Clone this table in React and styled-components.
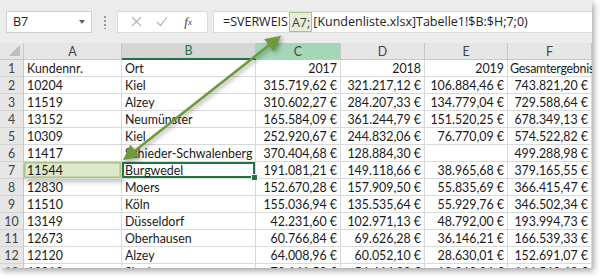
import React from "react";
import styled, { createGlobalStyle } from "styled-components";

const GlobalStyle = createGlobalStyle`
  html, body { margin: 0; padding: 0; background: #ffffff; }
  body { width: 600px; height: 278px; overflow: hidden; }
`;

const rows = [
  ["Kundennr.", "Ort", "2017", "2018", "2019", "Gesamtergebnis"],
  ["10204", "Kiel", "315.719,62 €", "321.217,12 €", "106.884,46 €", "743.821,20 €"],
  ["11519", "Alzey", "310.602,27 €", "284.207,33 €", "134.779,04 €", "729.588,64 €"],
  ["13152", "Neumünster", "165.584,09 €", "361.244,79 €", "151.520,25 €", "678.349,13 €"],
  ["10309", "Kiel", "252.920,67 €", "244.832,06 €", "76.770,09 €", "574.522,82 €"],
  ["11417", "Schieder-Schwalenberg", "370.404,68 €", "128.884,30 €", "", "499.288,98 €"],
  ["11544", "Burgwedel", "191.081,21 €", "149.118,66 €", "38.965,68 €", "379.165,55 €"],
  ["12830", "Moers", "152.670,28 €", "157.909,50 €", "55.835,69 €", "366.415,47 €"],
  ["11510", "Köln", "155.036,94 €", "135.535,64 €", "55.929,76 €", "346.502,34 €"],
  ["13149", "Düsseldorf", "42.231,60 €", "102.971,13 €", "48.792,00 €", "193.994,73 €"],
  ["12673", "Oberhausen", "60.766,84 €", "69.626,28 €", "36.146,21 €", "166.539,33 €"],
  ["12120", "Alzey", "64.008,96 €", "60.052,10 €", "28.630,01 €", "152.691,07 €"],
  ["12912", "Siegburg", "70.141,52 €", "56.464,30 €", "19.963,86 €", "146.569,68 €"],
];

const columns = ["A", "B", "C", "D", "E", "F"];

const Frame = styled.div`
  position: relative;
  width: 592px;
  height: 268px;
  overflow: hidden;
  background: #ffffff;
  box-shadow: 2px 3px 6px rgba(0, 0, 0, 0.35);
`;

const Toolbar = styled.div`
  display: flex;
  align-items: center;
  height: 43px;
  padding: 0 0 0 6px;
  box-sizing: border-box;
  background: #ececec;
  font-family: "Open Sans", "Liberation Sans", sans-serif;
`;

const NameBox = styled.div`
  display: flex;
  align-items: center;
  justify-content: space-between;
  width: 86px;
  height: 22px;
  box-sizing: border-box;
  padding: 0 6px;
  background: #fff;
  border: 1px solid #d0d0d0;
  font-size: 12.5px;
  color: #222;
`;

const Caret = styled.span`
  width: 0;
  height: 0;
  border-left: 3.5px solid transparent;
  border-right: 3.5px solid transparent;
  border-top: 4px solid #666;
`;

const Grip = styled.div`
  width: 2px;
  height: 14px;
  margin: 0 11px 0 12px;
  background: radial-gradient(circle, #999 0.8px, transparent 1px) 0 0 / 2px 4px repeat-y;
`;

const ButtonBox = styled.div`
  display: flex;
  align-items: center;
  justify-content: space-around;
  width: 91px;
  height: 22px;
  box-sizing: border-box;
  background: #fff;
  border: 1px solid #dcdcdc;
  padding: 0 6px;
`;

const IconButton = styled.span`
  display: flex;
  align-items: center;
  justify-content: center;
  width: 18px;
  height: 18px;
  color: ${(p) => (p.$dark ? "#444" : "#b4b4b4")};
  font-family: "Liberation Serif", serif;
  font-style: italic;
  font-size: 13px;
`;

const FormulaBox = styled.div`
  display: flex;
  align-items: center;
  flex: 1;
  height: 22px;
  margin-left: 5px;
  box-sizing: border-box;
  padding-left: 9px;
  background: #fff;
  border: 1px solid #dcdcdc;
  border-right: none;
  font-size: 12.5px;
  color: #222;
  white-space: nowrap;
`;

const RefHighlight = styled.span`
  display: inline-block;
  height: 20px;
  line-height: 19px;
  padding: 0 1px 0 2px;
  margin: 0 1px;
  box-sizing: border-box;
  background: #e6eed9;
  border: 1.5px solid #a9c47f;
  color: #3b3b3b;
`;

const Grid = styled.div`
  display: grid;
  grid-template-columns: 24px 98px 134px 85px 84px 83px 84px;
  grid-auto-rows: 17px;
  font-family: Lato, "Liberation Sans", sans-serif;
  font-size: 12.4px;
  color: #1a1a1a;
`;

const Corner = styled.div`
  position: relative;
  background: #e6e6e6;
  border-right: 1px solid #c8c8c8;
  border-bottom: 1px solid #c8c8c8;
  &::after {
    content: "";
    position: absolute;
    right: 3px;
    bottom: 3px;
    border-left: 11px solid transparent;
    border-bottom: 11px solid #bdbdbd;
  }
`;

const ColHead = styled.div`
  display: flex;
  align-items: center;
  justify-content: center;
  box-sizing: border-box;
  background: ${(p) => (p.$fill ? "#a3d7b8" : p.$active ? "#d6d6d6" : "#e6e6e6")};
  color: ${(p) => (p.$active ? "#217346" : "#444")};
  border-right: 1px solid #c8c8c8;
  border-bottom: ${(p) => (p.$active ? "2px solid #217346" : "1px solid #c8c8c8")};
`;

const RowHead = styled.div`
  display: flex;
  align-items: center;
  justify-content: center;
  box-sizing: border-box;
  background: #e6e6e6;
  color: #444;
  border-right: 1px solid #c8c8c8;
  border-bottom: 1px solid #d4d4d4;
`;

const Cell = styled.div`
  position: relative;
  display: flex;
  align-items: center;
  justify-content: ${(p) => (p.$right ? "flex-end" : "flex-start")};
  box-sizing: border-box;
  padding: 0 3px 0 ${(p) => (p.$tight ? "2px" : "3px")};
  letter-spacing: ${(p) => (p.$tight ? "-0.25px" : "normal")};
  white-space: nowrap;
  border-right: 1px solid #d9d9d9;
  border-bottom: 1px solid #d9d9d9;
  background: ${(p) => (p.$ref ? "#dde8cd" : "#fff")};
  ${(p) =>
    p.$ref &&
    `
    box-shadow: inset 0 0 0 1.5px #a9c47f, 2px 3px 5px rgba(0,0,0,0.25);
    z-index: 1;
  `}
  ${(p) =>
    p.$selected &&
    `
    box-shadow: inset 0 0 0 2px #217346;
    z-index: 2;
  `}
`;

const Handle = styled.span`
  position: absolute;
  right: -3px;
  bottom: -3px;
  width: 5px;
  height: 5px;
  background: #217346;
  border: 1px solid #fff;
`;

const ArrowLayer = styled.svg`
  position: absolute;
  left: 0;
  top: 0;
  pointer-events: none;
  z-index: 5;
  filter: drop-shadow(2px 2px 2px rgba(0, 0, 0, 0.35));
`;

function Arrow() {
  return (
    <ArrowLayer width="592" height="268" viewBox="0 0 592 268">
      <defs>
        <marker id="head" markerWidth="6" markerHeight="6" refX="4" refY="3" orient="auto-start-reverse" markerUnits="strokeWidth">
          <path d="M0,0 L6,3 L0,6 Z" fill="#6e9a3c" />
        </marker>
      </defs>
      <line x1="127" y1="157" x2="277" y2="39" stroke="#6e9a3c" strokeWidth="2.6" markerStart="url(#head)" markerEnd="url(#head)" />
    </ArrowLayer>
  );
}

const isNumeric = (v) => /^[\d.,\s€]+$/.test(v) && v !== "";

export default function App() {
  return (
    <>
      <GlobalStyle />
      <Frame>
        <Toolbar>
          <NameBox>
            B7
            <Caret />
          </NameBox>
          <Grip />
          <ButtonBox>
            <IconButton>
              <svg width="11" height="11" viewBox="0 0 11 11">
                <path d="M1 1 L10 10 M10 1 L1 10" stroke="currentColor" strokeWidth="1.2" />
              </svg>
            </IconButton>
            <IconButton>
              <svg width="12" height="11" viewBox="0 0 12 11">
                <path d="M1 6 L4.5 9.5 L11 1" stroke="currentColor" strokeWidth="1.2" fill="none" />
              </svg>
            </IconButton>
            <IconButton $dark>
              f<sub style={{ fontSize: "9px" }}>x</sub>
            </IconButton>
          </ButtonBox>
          <FormulaBox>
            =SVERWEIS
            <RefHighlight>A7;</RefHighlight>
            [Kundenliste.xlsx]Tabelle1!$B:$H;7;0)
          </FormulaBox>
        </Toolbar>
        <Grid>
          <Corner />
          {columns.map((c) => (
            <ColHead key={c} $active={c === "B"} $fill={c === "C"}>
              {c}
            </ColHead>
          ))}
          {rows.map((r, i) => (
            <React.Fragment key={i}>
              <RowHead>{i + 1}</RowHead>
              {r.map((v, j) => (
                <Cell
                  key={j}
                  $right={j >= 2 && isNumeric(v)}
                  $tight={i === 0 && j === 5}
                  $ref={i === 6 && j === 0}
                  $selected={i === 6 && j === 1}
                >
                  {v}
                  {i === 6 && j === 1 && <Handle />}
                </Cell>
              ))}
            </React.Fragment>
          ))}
        </Grid>
        <Arrow />
      </Frame>
    </>
  );
}
